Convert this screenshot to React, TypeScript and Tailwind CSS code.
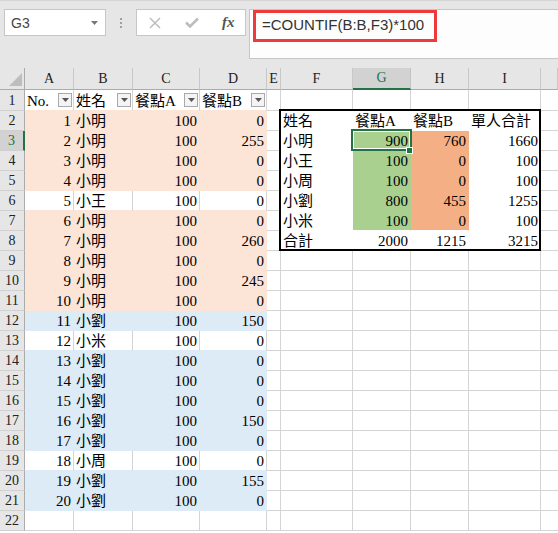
import React from 'react';
import type { ReactNode } from 'react';

type F = 'o' | 'b' | 'w' | 'g' | 'h' | 't';

const GRID = 'grid grid-cols-[25px_49px_59px_67px_67px_14px_72px_58px_58px_72px_1fr]';

const BG: Record<F, string> = {
  o: 'bg-[#fce4d6]',
  b: 'bg-[#ddebf7]',
  w: 'bg-white',
  g: 'bg-[#a9d08e]',
  h: 'bg-[#f4b084]',
  t: 'bg-white',
};
const BR: Record<F, string> = {
  o: 'border-r-[#fce4d6]',
  b: 'border-r-[#ddebf7]',
  w: 'border-r-[#d4d4d4]',
  g: 'border-r-[#a9d08e]',
  h: 'border-r-[#f4b084]',
  t: 'border-r-white',
};
const BB: Record<F, string> = {
  o: 'border-b-[#fce4d6]',
  b: 'border-b-[#ddebf7]',
  w: 'border-b-[#d4d4d4]',
  g: 'border-b-[#a9d08e]',
  h: 'border-b-[#f4b084]',
  t: 'border-b-white',
};

// No., name, A, B, fill
const data: [number, string, number, number, F][] = [
  [1, '小明', 100, 0, 'o'],
  [2, '小明', 100, 255, 'o'],
  [3, '小明', 100, 0, 'o'],
  [4, '小明', 100, 0, 'o'],
  [5, '小王', 100, 0, 'w'],
  [6, '小明', 100, 0, 'o'],
  [7, '小明', 100, 260, 'o'],
  [8, '小明', 100, 0, 'o'],
  [9, '小明', 100, 245, 'o'],
  [10, '小明', 100, 0, 'o'],
  [11, '小劉', 100, 150, 'b'],
  [12, '小米', 100, 0, 'w'],
  [13, '小劉', 100, 0, 'b'],
  [14, '小劉', 100, 0, 'b'],
  [15, '小劉', 100, 0, 'b'],
  [16, '小劉', 100, 150, 'b'],
  [17, '小劉', 100, 0, 'b'],
  [18, '小周', 100, 0, 'w'],
  [19, '小劉', 100, 155, 'b'],
  [20, '小劉', 100, 0, 'b'],
];

const summary: string[][] = [
  ['姓名', '餐點A', '餐點B', '單人合計'],
  ['小明', '900', '760', '1660'],
  ['小王', '100', '0', '100'],
  ['小周', '100', '0', '100'],
  ['小劉', '800', '455', '1255'],
  ['小米', '100', '0', '100'],
  ['合計', '2000', '1215', '3215'],
];

function Cell({ f, below, right, children }: { f: F; below: F; right?: boolean; children?: ReactNode }) {
  return (
    <div
      className={`border-r border-b flex items-end px-[2px] pb-[1px] overflow-hidden whitespace-nowrap ${right ? 'justify-end' : ''} ${BG[f]} ${BR[f]} ${BB[below]}`}
    >
      {children}
    </div>
  );
}

function Filter({ label }: { label: string }) {
  return (
    <div className="border-r border-b border-r-[#d4d4d4] border-b-[#fce4d6] bg-white flex items-end justify-between pl-[2px] pr-[1px] pb-[1px] whitespace-nowrap">
      <span>{label}</span>
      <span className="self-center w-[14px] h-[14px] border border-[#a9a9a9] bg-[#f4f4f4] flex items-center justify-center">
        <svg width="7" height="4" viewBox="0 0 7 4">
          <polygon points="0,0 7,0 3.5,4" fill="#555" />
        </svg>
      </span>
    </div>
  );
}

function RowHead({ n }: { n: number }) {
  const sel = n === 3;
  return (
    <div
      className={`border-b border-b-[#d0d0d0] flex items-end justify-center pb-[2px] text-[14px] ${
        sel ? 'bg-[#d2d2d2] text-[#217346] border-r-2 border-r-[#217346]' : 'bg-[#e6e6e6] text-[#222] border-r border-r-[#ababab]'
      }`}
    >
      {n}
    </div>
  );
}

function fillOf(n: number): F {
  if (n >= 2 && n <= 21) return data[n - 2][4];
  return 'w';
}

export default function App() {
  const rowNums = Array.from({ length: 22 }, (_, i) => i + 1);
  const letters = ['A', 'B', 'C', 'D', 'E', 'F', 'G', 'H', 'I', ''];

  return (
    <div className="w-[558px] h-[533px] overflow-hidden bg-white">
      {/* formula bar */}
      <div className="h-[68px] bg-[#e6e6e6] border-t border-[#d6d6d6] flex items-start pt-[8px] pl-[4px] font-['Liberation_Sans',sans-serif]">
        <div className="w-[102px] h-[27px] bg-white border border-[#c6c6c6] flex items-center justify-between pl-[6px] pr-[7px] pt-[2px] text-[14px] text-[#444]">
          <span>G3</span>
          <svg width="7" height="4" viewBox="0 0 7 4" className="-mt-[2px]">
            <polygon points="0,0 7,0 3.5,4" fill="#777" />
          </svg>
        </div>
        <div className="ml-[14px] mt-[9px] flex flex-col gap-[2px]">
          <span className="w-[2px] h-[2px] bg-[#a0a0a0]" />
          <span className="w-[2px] h-[2px] bg-[#a0a0a0]" />
          <span className="w-[2px] h-[2px] bg-[#a0a0a0]" />
        </div>
        <div className="ml-[14px] w-[110px] h-[27px] bg-white border border-[#c6c6c6] flex items-center pl-[12px]">
          <svg width="12" height="12" viewBox="0 0 12 12">
            <path d="M1 1 L11 11 M11 1 L1 11" stroke="#bdbdbd" strokeWidth="1.5" />
          </svg>
          <svg width="14" height="11" viewBox="0 0 14 11" className="ml-[24px]">
            <path d="M1 5.5 L5 9.5 L13 1.5" stroke="#bdbdbd" strokeWidth="2.6" fill="none" />
          </svg>
          <span className="ml-[23px] font-['Liberation_Serif',serif] italic font-semibold text-[15px] text-[#555] leading-none">
            fx
          </span>
        </div>
        <div className="ml-[3px] flex-1 h-[50px] bg-[#fdfdfd] border border-r-0 border-[#c6c6c6] pl-[3px]">
          <div className="w-[184px] h-[32px] border-[3px] border-[#ee3a3a] pl-[6px] pt-[4px] text-[15px] leading-none text-[#333]">
            =COUNTIF(B:B,F3)*100
          </div>
        </div>
      </div>

      {/* sheet */}
      <div className="font-['Liberation_Serif','Noto_Sans_CJK_TC',serif] text-[15px] leading-none text-black">
        <div className={`${GRID} h-[22px] bg-[#e6e6e6]`}>
          <div className="border-r border-b border-r-[#ababab] border-b-[#ababab] flex items-end justify-end pr-[2px] pb-[3px]">
            <svg width="13" height="13" viewBox="0 0 13 13">
              <polygon points="13,0 13,13 0,13" fill="#bdbdbd" />
            </svg>
          </div>
          {letters.map((l, i) =>
            l === 'G' ? (
              <div
                key={i}
                className="bg-[#d2d2d2] border-r border-r-[#c3c3c3] border-b-2 border-b-[#217346] flex items-center justify-center text-[14px] text-[#217346]"
              >
                {l}
              </div>
            ) : (
              <div
                key={i}
                className="border-r border-b border-r-[#c8c8c8] border-b-[#ababab] flex items-center justify-center text-[14px] text-[#222]"
              >
                {l}
              </div>
            ),
          )}
        </div>

        <div className="relative">
          {rowNums.map((n) => {
            const f = fillOf(n);
            const next = fillOf(n + 1);
            const below: F = f !== 'w' ? f : next !== 'w' ? next : 'w';
            const inTable = n >= 2 && n <= 8;
            const s = inTable ? summary[n - 2] : null;
            return (
              <div key={n} className={`${GRID} ${n === 1 ? 'h-[21px]' : 'h-5'}`}>
                <RowHead n={n} />
                {n === 1 ? (
                  <>
                    <Filter label="No." />
                    <Filter label="姓名" />
                    <Filter label="餐點A" />
                    <Filter label="餐點B" />
                  </>
                ) : n <= 21 ? (
                  <>
                    <Cell f={f} below={below} right>
                      {data[n - 2][0]}
                    </Cell>
                    <Cell f={f} below={below}>
                      {data[n - 2][1]}
                    </Cell>
                    <Cell f={f} below={below} right>
                      {data[n - 2][2]}
                    </Cell>
                    <Cell f={f} below={below} right>
                      {data[n - 2][3]}
                    </Cell>
                  </>
                ) : (
                  <>
                    <Cell f="w" below="w" />
                    <Cell f="w" below="w" />
                    <Cell f="w" below="w" />
                    <Cell f="w" below="w" />
                  </>
                )}
                <Cell f="w" below="w" />
                {s ? (
                  <>
                    <Cell f="t" below="t">
                      {s[0]}
                    </Cell>
                    <Cell f={n >= 3 && n <= 7 ? 'g' : 't'} below={n >= 3 && n <= 6 ? 'g' : 't'} right={n > 2}>
                      {s[1]}
                    </Cell>
                    <Cell f={n >= 3 && n <= 7 ? 'h' : 't'} below={n >= 3 && n <= 6 ? 'h' : 't'} right={n > 2}>
                      {s[2]}
                    </Cell>
                    <Cell f="t" below="t" right={n > 2}>
                      {s[3]}
                    </Cell>
                  </>
                ) : (
                  <>
                    <Cell f="w" below="w" />
                    <Cell f="w" below="w" />
                    <Cell f="w" below="w" />
                    <Cell f="w" below="w" />
                  </>
                )}
                <div className="border-b border-b-[#d4d4d4]" />
              </div>
            );
          })}

          {/* thick outline of the summary table */}
          <div className="absolute left-[279px] top-[19px] w-[262px] h-[142px] border-2 border-black pointer-events-none" />
          {/* active cell G3 */}
          <div className="absolute left-[351px] top-[39px] w-[61px] h-[22px] border-2 border-[#217346] shadow-[inset_0_0_0_1px_white] pointer-events-none" />
          <div className="absolute left-[406px] top-[57px] w-[7px] h-[7px] bg-[#217346] border border-white" />
        </div>
      </div>
    </div>
  );
}
